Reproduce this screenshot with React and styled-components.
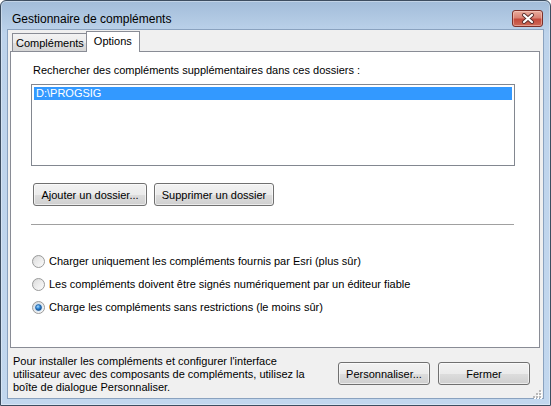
import React from 'react';
import styled, { createGlobalStyle, css } from 'styled-components';

const Global = createGlobalStyle`
  html, body { margin: 0; padding: 0; background: #ffffff; }
  body { font-family: "Liberation Sans", Arial, sans-serif; }
  * { box-sizing: border-box; }
`;

const Window = styled.div`
  width: 551px;
  height: 406px;
  border: 1px solid #3d4d60;
  border-radius: 6px 6px 0 0;
  padding: 0 6px 6px;
  background: linear-gradient(to bottom, #a2bcd9 0px, #b1c9e3 18px, #bdd3eb 32px, #c2d7ee 100%);
  display: flex;
  flex-direction: column;
  box-shadow: inset 0 0 0 1px rgba(255, 255, 255, 0.35);
`;

const TitleBar = styled.div`
  height: 28px;
  display: flex;
  align-items: flex-start;
  justify-content: space-between;
  padding: 0 1px 0 5px;
`;

const Title = styled.div`
  margin-top: 10px;
  font-size: 12px;
  line-height: 16px;
  color: #000;
`;

const CloseButton = styled.div`
  margin-top: 9px;
  width: 31px;
  height: 17px;
  border: 1px solid #7b302a;
  border-radius: 3px;
  background: linear-gradient(to bottom, #e9ad9e 0%, #d98274 45%, #c44a3c 55%, #cd6a58 100%);
  display: flex;
  align-items: center;
  justify-content: center;
  box-shadow: inset 0 0 0 1px rgba(255, 220, 210, 0.45);
`;

const Client = styled.div`
  flex: 1;
  min-height: 0;
  background: #f0f0f0;
  border: 1px solid #8aa2bf;
  display: flex;
  flex-direction: column;
  position: relative;
`;

const TabStrip = styled.div`
  height: 21px;
  display: flex;
  align-items: flex-end;
  padding-left: 4px;
`;

const Tab = styled.div`
  border: 1px solid #898c95;
  border-bottom: none;
  font-size: 11px;
  color: #000;
  display: flex;
  align-items: center;
  justify-content: center;
  white-space: nowrap;
  ${(p) =>
    p.$active
      ? css`
          height: 21px;
          margin-bottom: -1px;
          margin-left: -2px;
          padding: 0 7px 2px;
          background: #ffffff;
          position: relative;
          z-index: 1;
        `
      : css`
          height: 18px;
          padding: 1px 3px 0;
          background: linear-gradient(to bottom, #f3f3f3 0%, #ebebeb 50%, #dedede 51%, #d6d6d6 100%);
        `}
`;

const Panel = styled.div`
  height: 297px;
  margin: 0 3px 0 2px;
  border: 1px solid #898c95;
  background: #ffffff;
  padding: 12px 20px 0 20px;
  display: flex;
  flex-direction: column;
  align-items: flex-start;
`;

const Label = styled.div`
  margin-left: 2px;
  font-size: 11px;
  line-height: 13px;
  color: #000;
`;

const ListBox = styled.div`
  margin-top: 7px;
  width: 484px;
  height: 82px;
  border: 1px solid #828790;
  background: #ffffff;
  padding: 1px;
`;

const ListItem = styled.div`
  margin: 1px;
  height: 13px;
  padding-left: 2px;
  font-size: 11px;
  line-height: 13px;
  color: ${(p) => (p.$selected ? '#ffffff' : '#000')};
  background: ${(p) => (p.$selected ? '#3399ff' : 'transparent')};
`;

const ButtonRow = styled.div`
  display: flex;
  gap: ${(p) => p.$gap}px;
  margin: ${(p) => p.$margin};
`;

const Button = styled.div`
  width: ${(p) => p.$w}px;
  height: 23px;
  border: 1px solid #707070;
  border-radius: 3px;
  background: linear-gradient(to bottom, #f2f2f2 0%, #ebebeb 50%, #dddddd 51%, #cfcfcf 100%);
  box-shadow: inset 0 0 0 1px rgba(255, 255, 255, 0.6);
  display: flex;
  align-items: center;
  justify-content: center;
  font-size: 11px;
  color: #000;
  white-space: nowrap;
`;

const Separator = styled.div`
  margin-top: 18px;
  width: 483px;
  border-top: 1px solid #a0a0a0;
`;

const RadioGroup = styled.div`
  margin-top: 29px;
  margin-left: 1px;
  display: flex;
  flex-direction: column;
  gap: 9px;
`;

const RadioRow = styled.div`
  height: 14px;
  display: flex;
  align-items: center;
  gap: 4px;
  font-size: 11px;
  color: #000;
  white-space: nowrap;
`;

const Footer = styled.div`
  flex: 1;
  display: flex;
  padding: 7px 13px 0 5px;
`;

const FooterText = styled.div`
  font-size: 11px;
  line-height: 13px;
  color: #000;
  white-space: nowrap;
`;

const Grip = styled.div`
  position: absolute;
  right: 1px;
  bottom: 1px;
  width: 12px;
  height: 12px;
`;

function CloseIcon() {
  return (
    <svg width="14" height="11" viewBox="0 0 14 11">
      <path d="M3 2 L11 9 M11 2 L3 9" stroke="#5a2f2c" strokeWidth="4" strokeLinecap="round" />
      <path d="M3 2 L11 9 M11 2 L3 9" stroke="#ffffff" strokeWidth="2.2" strokeLinecap="round" />
    </svg>
  );
}

function Radio({ checked, id }) {
  return (
    <svg width="13" height="13" viewBox="0 0 13 13">
      <defs>
        <linearGradient id={`ro${id}`} x1="0" y1="0" x2="1" y2="1">
          <stop offset="0" stopColor="#d6d6d6" />
          <stop offset="1" stopColor="#ffffff" />
        </linearGradient>
        <linearGradient id={`ri${id}`} x1="0" y1="0" x2="1" y2="1">
          <stop offset="0" stopColor="#e0e0e0" />
          <stop offset="1" stopColor="#f8f8f8" />
        </linearGradient>
        <radialGradient id={`rd${id}`} cx="0.4" cy="0.35" r="0.7">
          <stop offset="0" stopColor="#a8dcff" />
          <stop offset="0.5" stopColor="#2f86d6" />
          <stop offset="1" stopColor="#0f4a8a" />
        </radialGradient>
      </defs>
      <circle cx="6.5" cy="6.5" r="6" fill={`url(#ro${id})`} stroke="#999a9a" strokeWidth="1" />
      <circle cx="6.5" cy="6.5" r="4.2" fill={checked ? '#cfe6fa' : `url(#ri${id})`} />
      {checked && <circle cx="6.5" cy="6.5" r="3" fill={`url(#rd${id})`} stroke="#1f4f86" strokeWidth="0.6" />}
    </svg>
  );
}

function GripIcon() {
  const dots = [
    [9, 3], [9, 6], [6, 6], [9, 9], [6, 9], [3, 9],
  ];
  return (
    <svg width="12" height="12" viewBox="0 0 12 12">
      {dots.map(([x, y], i) => (
        <g key={i}>
          <rect x={x + 1} y={y + 1} width="2" height="2" fill="#ffffff" />
          <rect x={x} y={y} width="2" height="2" fill="#b8b8b8" />
        </g>
      ))}
    </svg>
  );
}

const options = [
  { label: 'Charger uniquement les compléments fournis par Esri (plus sûr)', checked: false },
  { label: 'Les compléments doivent être signés numériquement par un éditeur fiable', checked: false },
  { label: 'Charge les compléments sans restrictions (le moins sûr)', checked: true },
];

export default function App() {
  return (
    <>
      <Global />
      <Window>
        <TitleBar>
          <Title>Gestionnaire de compléments</Title>
          <CloseButton>
            <CloseIcon />
          </CloseButton>
        </TitleBar>
        <Client>
          <TabStrip>
            <Tab>Compléments</Tab>
            <Tab $active>Options</Tab>
          </TabStrip>
          <Panel>
            <Label>Rechercher des compléments supplémentaires dans ces dossiers :</Label>
            <ListBox>
              <ListItem $selected>D:\PROGSIG</ListItem>
            </ListBox>
            <ButtonRow $gap={7} $margin="17px 0 0 2px">
              <Button $w={114}>Ajouter un dossier...</Button>
              <Button $w={120}>Supprimer un dossier</Button>
            </ButtonRow>
            <Separator />
            <RadioGroup>
              {options.map((o, i) => (
                <RadioRow key={i}>
                  <Radio checked={o.checked} id={i} />
                  {o.label}
                </RadioRow>
              ))}
            </RadioGroup>
          </Panel>
          <Footer>
            <FooterText>
              Pour installer les compléments et configurer l'interface
              <br />
              utilisateur avec des composants de compléments, utilisez la
              <br />
              boîte de dialogue Personnaliser.
            </FooterText>
            <ButtonRow $gap={8} $margin="7px 0 0 auto">
              <Button $w={92}>Personnaliser...</Button>
              <Button $w={92}>Fermer</Button>
            </ButtonRow>
          </Footer>
          <Grip>
            <GripIcon />
          </Grip>
        </Client>
      </Window>
    </>
  );
}
